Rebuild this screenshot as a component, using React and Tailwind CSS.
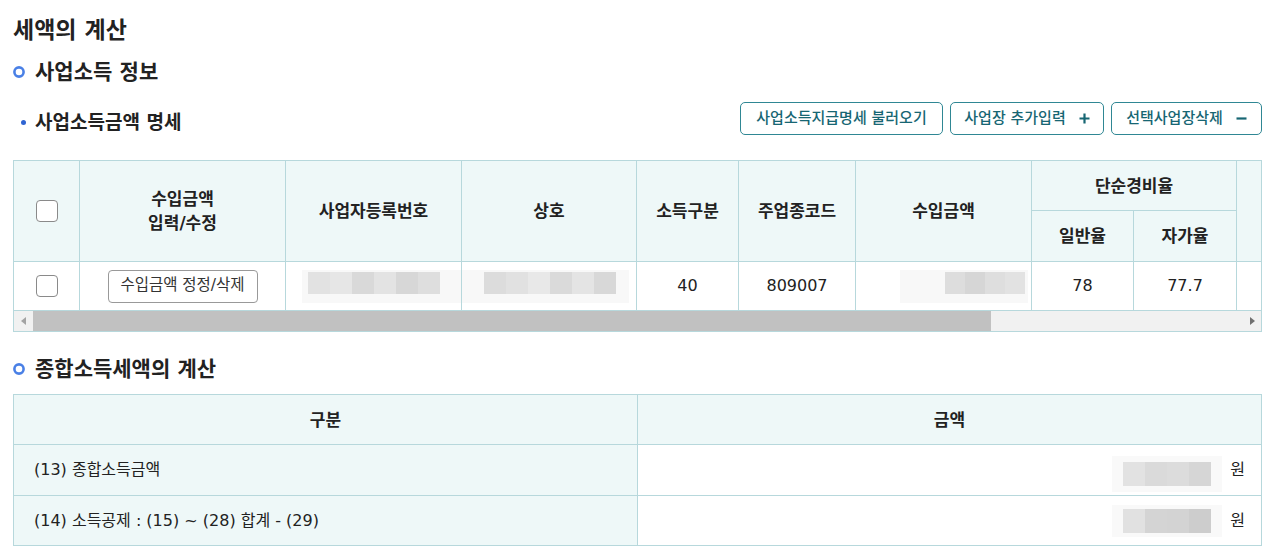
const Ring = () => (
  <svg width="12" height="12" viewBox="0 0 12 12" className="shrink-0">
    <circle cx="6" cy="6" r="4.6" fill="none" stroke="#4a80e6" strokeWidth="2.6" />
  </svg>
);

const Checkbox = () => (
  <div className="w-[22px] h-[22px] rounded-[4px] border border-[#8a8a8a] bg-white" />
);

function Mosaic({ colors, h = "h-[22px]", seg = "w-[22px]" }) {
  return (
    <div className="flex">
      {colors.map((c, i) => (
        <div key={i} className={`${c} ${h} ${seg}`} />
      ))}
    </div>
  );
}

const Hd = ({ className = "", children }) => (
  <div
    className={`bg-[#eef8f8] border-r border-b border-[#b7d8dc] flex items-center justify-center text-center text-[17px] font-semibold leading-[24px] ${className}`}
  >
    {children}
  </div>
);

const Td = ({ className = "", children }) => (
  <div className={`bg-white border-r border-b border-[#b7d8dc] flex items-center justify-center ${className}`}>
    {children}
  </div>
);

const TealBtn = ({ className = "", children }) => (
  <button className={`h-[33px] px-[11px] flex items-center justify-center gap-[13px] whitespace-nowrap border border-[#2f8794] rounded-[5px] bg-white text-[15px] font-medium text-[#176673] ${className}`}>
    {children}
  </button>
);

export default function App() {
  return (
    <div className="w-[1268px] h-[554px] overflow-hidden bg-white pl-[13px] pr-[6px] pt-[15px] font-['DejaVu_Sans','Noto_Sans_CJK_KR',sans-serif] text-[#222]">
      <h1 className="text-[23px] leading-[30px] font-bold">세액의 계산</h1>

      <div className="mt-[13px] flex items-center h-[28px]">
        <Ring />
        <h2 className="ml-[10px] text-[21px] leading-[28px] font-bold">사업소득 정보</h2>
      </div>

      <div className="mt-[16px] flex h-[33px] items-center">
        <div className="flex items-center pt-[7px]">
          <span className="ml-[8px] w-[5px] h-[5px] rounded-full bg-[#2f64d2]" />
          <span className="ml-[9px] text-[19px] leading-[24px] font-semibold">사업소득금액 명세</span>
        </div>
        <div className="ml-auto flex gap-[7px]">
          <TealBtn className="w-[203px]">사업소득지급명세 불러오기</TealBtn>
          <TealBtn className="w-[154px]">
            <span>사업장 추가입력</span>
            <svg width="11" height="11" viewBox="0 0 11 11" className="shrink-0">
              <path d="M5.5 0.5v10M0.5 5.5h10" stroke="#176673" strokeWidth="2.2" />
            </svg>
          </TealBtn>
          <TealBtn className="w-[151px]">
            <span>선택사업장삭제</span>
            <svg width="11" height="11" viewBox="0 0 11 11" className="shrink-0">
              <path d="M0.5 5.5h10" stroke="#176673" strokeWidth="2.2" />
            </svg>
          </TealBtn>
        </div>
      </div>

      {/* Table 1 */}
      <div className="mt-[25px] border border-[#b7d8dc] overflow-hidden">
        <div className="grid w-[1323px] grid-cols-[66px_206px_176px_175px_102px_117px_176px_102px_103px_100px] grid-rows-[50px_51px_49px] text-[16px]">
          <Hd className="row-span-2"><Checkbox /></Hd>
          <Hd className="row-span-2">수입금액<br />입력/수정</Hd>
          <Hd className="row-span-2">사업자등록번호</Hd>
          <Hd className="row-span-2">상호</Hd>
          <Hd className="row-span-2">소득구분</Hd>
          <Hd className="row-span-2">주업종코드</Hd>
          <Hd className="row-span-2">수입금액</Hd>
          <Hd className="col-span-2">단순경비율</Hd>
          <Hd className="row-span-2"></Hd>
          <Hd>일반율</Hd>
          <Hd>자가율</Hd>

          <Td><Checkbox /></Td>
          <Td>
            <button className="w-[150px] h-[33px] border border-[#999] rounded-[4px] bg-white text-[15.5px] text-[#333] whitespace-nowrap">
              수입금액 정정/삭제
            </button>
          </Td>
          <Td className="justify-start pl-[16px]">
            <div className="bg-[#f8f8f8] w-[160px] pt-[2px] pb-[9px] pl-[6px]">
              <Mosaic colors={["bg-[#e2e2e2]", "bg-[#e6e6e6]", "bg-[#d9d9d9]", "bg-[#e3e3e3]", "bg-[#d7d7d7]", "bg-[#dedede]"]} />
            </div>
          </Td>
          <Td className="justify-start">
            <div className="bg-[#f8f8f8] w-[167px] pt-[2px] pb-[9px] pl-[22px]">
              <Mosaic colors={["bg-[#dcdcdc]", "bg-[#e1e1e1]", "bg-[#e8e8e8]", "bg-[#dadada]", "bg-[#e4e4e4]", "bg-[#d8d8d8]"]} />
            </div>
          </Td>
          <Td>40</Td>
          <Td>809007</Td>
          <Td className="justify-end pr-[3px]">
            <div className="bg-[#f8f8f8] w-[128px] pt-[2px] pb-[9px] pl-[45px] flex">
              <Mosaic colors={["bg-[#dddddd]", "bg-[#d6d6d6]", "bg-[#dedede]", "bg-[#e2e2e2]"]} seg="w-[20px]" />
            </div>
          </Td>
          <Td>78</Td>
          <Td>77.7</Td>
          <Td></Td>
        </div>
        <div className="h-[20px] flex bg-[#f1f1f1]">
          <div className="w-[19px] flex items-center justify-center">
            <svg width="5" height="8" viewBox="0 0 5 8"><path d="M5 0L0 4l5 4z" fill="#a3a3a3" /></svg>
          </div>
          <div className="w-[958px] bg-[#c1c1c1]" />
          <div className="flex-1" />
          <div className="w-[17px] flex items-center justify-center">
            <svg width="5" height="8" viewBox="0 0 5 8"><path d="M0 0l5 4-5 4z" fill="#707070" /></svg>
          </div>
        </div>
      </div>

      <div className="mt-[23px] flex items-center h-[28px]">
        <Ring />
        <h2 className="ml-[10px] text-[21px] leading-[28px] font-bold">종합소득세액의 계산</h2>
      </div>

      {/* Table 2 */}
      <div className="mt-[11px] border-l border-t border-r border-[#b7d8dc] grid grid-cols-[624px_1fr] grid-rows-[50px_51px_50px] text-[16px]">
        <Hd>구분</Hd>
        <Hd className="border-r-0">금액</Hd>
        <div className="bg-[#eef8f8] border-r border-b border-[#b7d8dc] flex items-center pl-[20px]">
          (13) 종합소득금액
        </div>
        <div className="bg-white border-b border-[#b7d8dc] flex items-center justify-end pr-[16px]">
          <div className="bg-[#f9f9f9] px-[11px] py-[6px] mt-[8px]">
            <Mosaic colors={["bg-[#e2e2e2]", "bg-[#dadada]", "bg-[#dcdcdc]", "bg-[#d6d6d6]"]} h="h-[24px]" />
          </div>
          <span className="ml-[8px]">원</span>
        </div>
        <div className="bg-[#eef8f8] border-r border-b border-[#b7d8dc] flex items-center pl-[20px]">
          (14) 소득공제 : (15) ~ (28) 합계 - (29)
        </div>
        <div className="bg-white border-b border-[#b7d8dc] flex items-center justify-end pr-[16px]">
          <div className="bg-[#f9f9f9] px-[11px] py-[4px]">
            <Mosaic colors={["bg-[#e1e1e1]", "bg-[#d4d4d4]", "bg-[#d3d3d3]", "bg-[#cdcdcd]"]} h="h-[24px]" />
          </div>
          <span className="ml-[8px]">원</span>
        </div>
      </div>
    </div>
  );
}
